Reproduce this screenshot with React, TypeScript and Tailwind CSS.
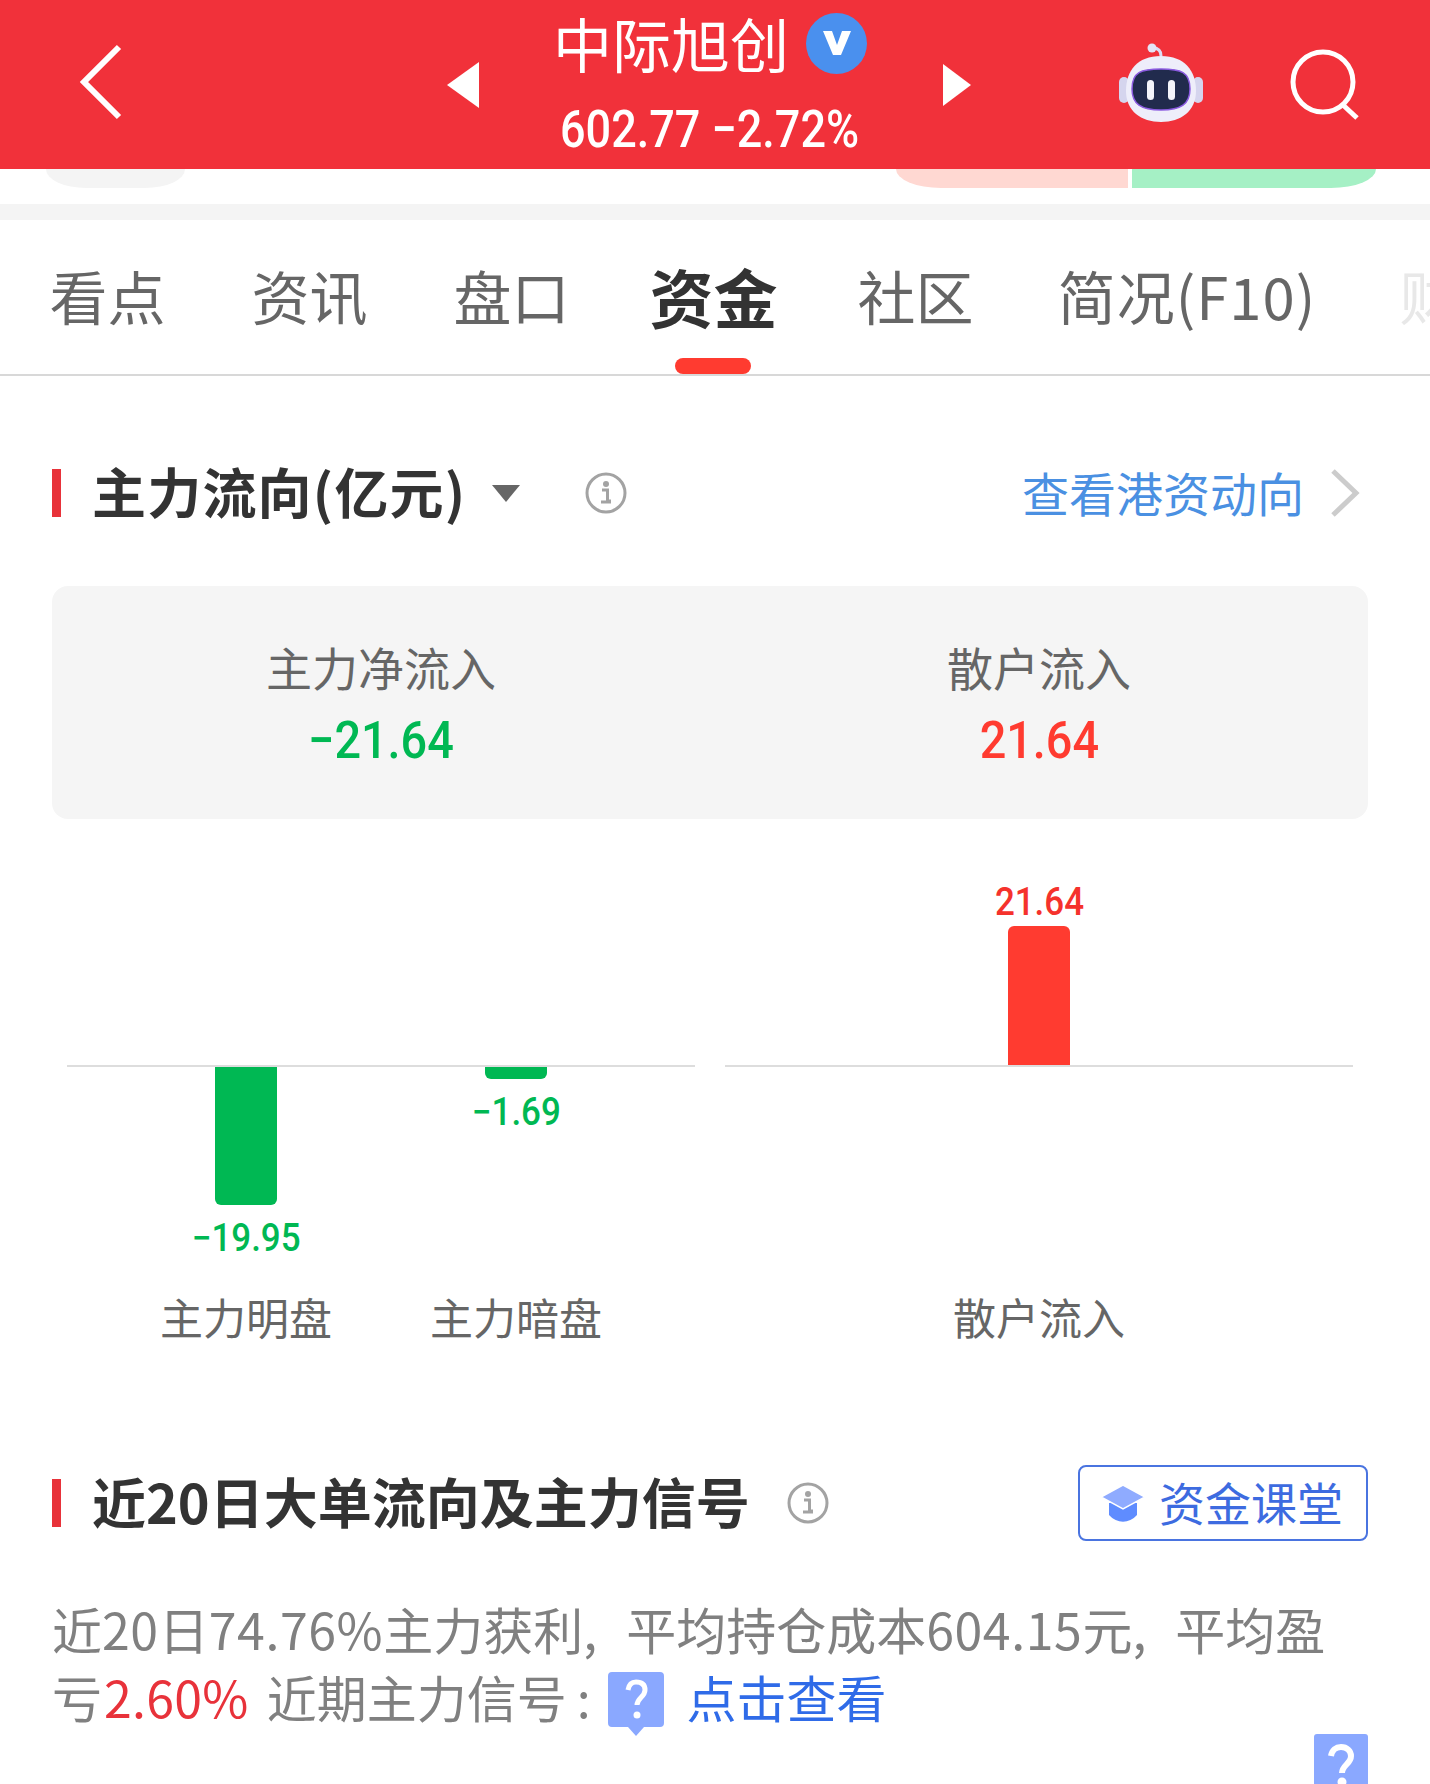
const tabs = [
  { name: "看点", cls: "w-[113px] text-[58px] font-normal text-[#666666] mr-[89px]" },
  { name: "资讯", cls: "w-[113px] text-[58px] font-normal text-[#666666] mr-[89px]" },
  { name: "盘口", cls: "w-[113px] text-[58px] font-normal text-[#666666] mr-[81px]" },
  { name: "资金", cls: "w-[129px] text-[64px] font-bold text-[#333333] mr-[81px]", active: true },
  { name: "社区", cls: "w-[113px] text-[58px] font-normal text-[#666666] mr-[85px]" },
  { name: "简况(F10)", cls: "w-[260px] text-[58px] tracking-[1px] font-normal text-[#666666] mr-[84px]" },
  { name: "财务", cls: "w-[113px] text-[58px] font-normal text-[#e8e8e8]" },
];

const numFont = "font-['Roboto',sans-serif]";

const InfoIcon = () => (
  <svg width="42" height="42" viewBox="0 0 42 42" className="shrink-0">
    <circle cx="21" cy="21" r="19" fill="none" stroke="#a3a3a3" strokeWidth="3" />
    <circle cx="21" cy="12" r="3" fill="#a3a3a3" />
    <path d="M17 18h5.5v11H26M16 30h10" fill="none" stroke="#a3a3a3" strokeWidth="3" />
  </svg>
);

const SectionBar = () => <div className="w-[9px] h-[48px] bg-[#e8323a] shrink-0" />;

const Bubble = () => (
  <svg width="56" height="64" viewBox="0 0 56 64">
    <path d="M4 0h48a4 4 0 0 1 4 4v47a4 4 0 0 1-4 4H36l-8 9-8-9H4a4 4 0 0 1-4-4V4a4 4 0 0 1 4-4z" fill="#8aa8ff" />
    <path d="M20 18c1-6 4-8 8-8 6 0 9 3 9 8 0 7-8 8-8 15" fill="none" stroke="#fff" strokeWidth="5" />
    <circle cx="29" cy="43" r="3.5" fill="#fff" />
  </svg>
);

const Robot = () => (
  <svg width="88" height="80" viewBox="0 0 88 80">
    <path d="M44 13c0-6-3-8-8-8" fill="none" stroke="#dcdcf5" strokeWidth="3" />
    <circle cx="35" cy="5" r="4.5" fill="#e4e4f6" />
    <rect x="2" y="34" width="10" height="26" rx="5" fill="#d5d5ee" />
    <rect x="76" y="34" width="10" height="26" rx="5" fill="#d5d5ee" />
    <path d="M44 13c24 0 35 15 35 35 0 20-15 31-35 31S9 68 9 48c0-20 11-35 35-35z" fill="#eeeefa" />
    <path d="M44 26c20 0 29 3 29 20 0 15-9 21-29 21s-29-6-29-21c0-17 9-20 29-20z" fill="#212b4d" stroke="#8b5be0" strokeWidth="1.5" />
    <rect x="30" y="37" width="7" height="20" rx="3.5" fill="#f4f4fb" />
    <rect x="51" y="37" width="7" height="20" rx="3.5" fill="#f4f4fb" />
  </svg>
);

type Col = { value: string; bar: number; up: boolean; label: string };

const Chart = ({ cols, className }: { cols: Col[]; className: string }) => (
  <div className="w-[628px]">
    <div className={`flex h-[246px] ${className}`}>
      {cols.map((c) => (
        <div key={c.label} className="w-[270px] flex flex-col items-center justify-end">
          {c.up && (
            <>
              <div className={`${numFont} font-medium inline-block scale-x-[0.92] text-[38px] leading-[46px] mb-[1px] text-[#f5322c]`}>{c.value}</div>
              <div className="w-[62px] shrink-0 bg-[#ff3b30] rounded-t-[6px]" style={{ height: c.bar }} />
            </>
          )}
        </div>
      ))}
    </div>
    <div className="h-[2px] bg-[#dddddd]" />
    <div className={`flex h-[220px] ${className}`}>
      {cols.map((c) => (
        <div key={c.label} className="w-[270px] flex flex-col items-center">
          {!c.up && (
            <>
              <div className="w-[62px] shrink-0 bg-[#00b853] rounded-b-[6px]" style={{ height: c.bar }} />
              <div className={`${numFont} font-medium inline-block scale-x-[0.92] text-[38px] leading-[46px] mt-[10px] text-[#00b853]`}>{c.value}</div>
            </>
          )}
        </div>
      ))}
    </div>
    <div className={`flex ${className}`}>
      {cols.map((c) => (
        <div key={c.label} className="w-[270px] text-center text-[43px] leading-[58px] text-[#666666]">
          {c.label}
        </div>
      ))}
    </div>
  </div>
);

export default function App() {
  return (
    <div className="w-[1430px] h-[1784px] overflow-hidden bg-white font-['Noto_Sans_CJK_SC',sans-serif]">
      {/* top bar */}
      <div className="h-[169px] bg-[#f1313a] flex items-center">
        <svg width="44" height="76" viewBox="0 0 44 76" className="ml-[79px] mb-[6px]">
          <path d="M40 3 5 38l35 35" fill="none" stroke="#fff" strokeWidth="6" />
        </svg>
        <svg width="32" height="46" viewBox="0 0 32 46" className="ml-[324px]">
          <path d="M32 0v46L0 23z" fill="#fff" />
        </svg>
        <div className="ml-[74px] w-[306px] h-full pt-[8px] flex flex-col text-white">
          <div className="flex items-center h-[70px]">
            <span className="text-[59px] leading-[70px] whitespace-nowrap">中际旭创</span>
            <span className="ml-[17px] w-[61px] h-[61px] shrink-0 rounded-full bg-[#4a90ee] flex items-center justify-center">
              <svg width="30" height="26" viewBox="0 0 30 26">
                <path d="M1 1h9l5 14 5-14h9L19 25h-8z" fill="#fff" />
              </svg>
            </span>
          </div>
          <div className="mt-[26px] h-[52px] pl-[7px] whitespace-nowrap">
            <span className={`${numFont} font-medium inline-block origin-left scale-x-[0.865] text-[52px] leading-[52px]`}>602.77 −2.72%</span>
          </div>
        </div>
        <svg width="28" height="42" viewBox="0 0 28 42" className="ml-[84px]">
          <path d="M0 0v42l28-21z" fill="#fff" />
        </svg>
        <div className="ml-[146px] mb-[4px]"><Robot /></div>
        <svg width="74" height="72" viewBox="0 0 74 72" className="ml-[84px]">
          <circle cx="34" cy="33" r="30" fill="none" stroke="#fff" strokeWidth="5" />
          <path d="m54 56 14 13" fill="none" stroke="#fff" strokeWidth="5" />
        </svg>
      </div>

      {/* cut-off pills under the bar */}
      <div className="h-[35px] flex items-start pl-[46px]">
        <div className="w-[139px] h-[19px] bg-[#f4f4f4] rounded-b-[40px_19px]" />
        <div className="ml-[711px] flex">
          <div className="w-[232px] h-[19px] bg-[#ffd8d2] rounded-bl-[45px_19px]" />
          <div className="w-[4px]" />
          <div className="w-[244px] h-[19px] bg-[#a5f0c5] rounded-br-[45px_19px]" />
        </div>
      </div>
      <div className="h-[16px] bg-[#f4f4f4]" />

      {/* tabs */}
      <div className="h-[156px] border-b-2 border-[#d8d8d8] flex items-center pl-[51px] overflow-hidden">
        {tabs.map((t) => (
          <div key={t.name} className={`relative h-full flex items-center justify-center shrink-0 whitespace-nowrap leading-none pb-[4px] ${t.cls}`}>
            {t.name}
            {t.active && <div className="absolute bottom-0 left-[26px] w-[76px] h-[16px] rounded-full bg-[#ff3b30]" />}
          </div>
        ))}
      </div>

      {/* main flow */}
      <div className="mt-[89px] pl-[52px] pr-[70px] flex items-center h-[56px]">
        <SectionBar />
        <h2 className="ml-[31px] mb-[4px] text-[54px] tracking-[1.2px] leading-none font-bold text-[#333333] whitespace-nowrap">主力流向(亿元)</h2>
        <svg width="28" height="17" viewBox="0 0 28 17" className="ml-[26px]">
          <path d="M0 0h28L14 17z" fill="#666666" />
        </svg>
        <div className="ml-[65px]"><InfoIcon /></div>
        <div className="ml-auto flex items-center">
          <span className="mb-[3px] text-[47px] leading-none text-[#4a90e2] whitespace-nowrap">查看港资动向</span>
          <svg width="30" height="48" viewBox="0 0 30 48" className="ml-[26px]">
            <path d="M3 2l23 22L3 46" fill="none" stroke="#cccccc" strokeWidth="5" />
          </svg>
        </div>
      </div>

      <div className="mt-[65px] ml-[52px] mr-[62px] h-[233px] bg-[#f5f5f5] rounded-[16px] grid grid-cols-2 text-center pt-[50px]">
        <div>
          <div className="text-[46px] leading-[60px] text-[#666666]">主力净流入</div>
          <div className={`${numFont} font-medium inline-block scale-x-[0.9] mt-[14px] text-[52px] leading-[62px] text-[#00b853]`}>−21.64</div>
        </div>
        <div>
          <div className="text-[46px] leading-[60px] text-[#666666]">散户流入</div>
          <div className={`${numFont} font-medium inline-block scale-x-[0.9] mt-[14px] text-[52px] leading-[62px] text-[#ff3b30]`}>21.64</div>
        </div>
      </div>

      <div className="flex pl-[67px] gap-[30px]">
        <Chart
          className="pl-[44px]"
          cols={[
            { value: "−19.95", bar: 138, up: false, label: "主力明盘" },
            { value: "−1.69", bar: 12, up: false, label: "主力暗盘" },
          ]}
        />
        <Chart
          className="justify-center"
          cols={[{ value: "21.64", bar: 139, up: true, label: "散户流入" }]}
        />
      </div>

      <div className="mt-[120px] pl-[52px] pr-[62px] flex items-center h-[76px]">
        <SectionBar />
        <h2 className="ml-[31px] mb-[4px] text-[54px] leading-none font-bold text-[#333333] whitespace-nowrap">近20日大单流向及主力信号</h2>
        <div className="ml-[37px]"><InfoIcon /></div>
        <div className="ml-auto w-[290px] h-[76px] border-2 border-[#4a74e0] rounded-[8px] flex items-center pl-[20px]">
          <svg width="46" height="40" viewBox="0 0 46 40">
            <path d="M9 20v12c8 9 20 9 28 0V20z" fill="#5f8cff" />
            <path d="M23 2 1 14l22 12 22-12z" fill="#8fabff" stroke="#fff" strokeWidth="1.5" />
          </svg>
          <span className="ml-[13px] mb-[4px] text-[46px] leading-none text-[#3d6be0] whitespace-nowrap">资金课堂</span>
        </div>
      </div>

      <p className="mt-[53px] pl-[52px] text-[50px] leading-[68px] text-[#808080] whitespace-nowrap">
        近<span className="tracking-[0.6px]">20</span>日<span className="tracking-[0.6px]">74.76%</span>主力获利,<span className="inline-block w-[29px]" />平均持仓成本<span className="tracking-[0.6px]">604.15</span>元,<span className="inline-block w-[29px]" />平均盈
        <br />
        亏<span className="ml-[2px] tracking-[0.3px] text-[#e8323a]">2.60%</span>
        <span className="ml-[18px]">近期主力信号<span className="ml-[10px]">:</span></span>
        <span className="inline-block align-middle ml-[17px] mr-[23px]"><Bubble /></span>
        <span className="text-[#2f6be8]">点击查看</span>
      </p>

      <div className="flex justify-end pr-[62px] mt-[-2px]">
        <div className="w-[54px] h-[60px] bg-[#8aa8ff] rounded-[3px] flex justify-center pt-[10px]">
          <svg width="30" height="44" viewBox="0 0 30 44">
            <path d="M5 12C6 6 10 3 15 3c6 0 10 4 10 9 0 8-9 9-9 17" fill="none" stroke="#fff" strokeWidth="6" />
            <circle cx="16" cy="38" r="4.5" fill="#fff" />
          </svg>
        </div>
      </div>
    </div>
  );
}
